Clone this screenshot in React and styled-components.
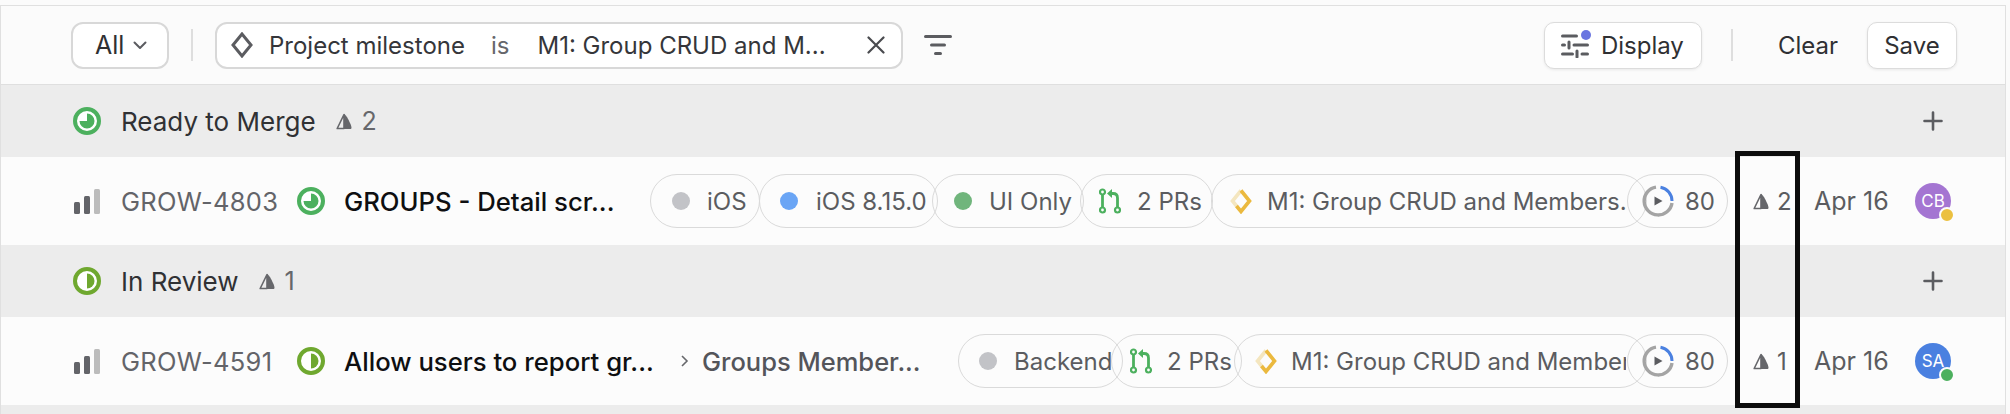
import React from "react";
import styled, { createGlobalStyle } from "styled-components";

const Global = createGlobalStyle`
  html, body { margin: 0; padding: 0; background: #fbfbfb; }
  body { font-family: Inter, "Noto Sans", sans-serif; -webkit-font-smoothing: antialiased; }
`;

const Page = styled.div`
  position: relative;
  width: 2010px;
  height: 414px;
  overflow: hidden;
  box-sizing: border-box;
  padding-top: 5px;
`;
const Panel = styled.div`
  width: 2006px;
  height: 409px;
  box-sizing: border-box;
  border-top: 1px solid #e0e0e0;
  border-left: 1px solid #e0e0e0;
  border-right: 1px solid #e0e0e0;
  background: #ececec;
`;
const Toolbar = styled.div`
  height: 79px;
  box-sizing: border-box;
  border-bottom: 1px solid #dfdfdf;
  background: #fbfbfb;
  display: flex;
  align-items: center;
  padding: 0 48px 0 70px;
`;
const Button = styled.div`
  height: 47px;
  box-sizing: border-box;
  display: flex;
  align-items: center;
  background: #fff;
  border: 1px solid #dcdcdc;
  border-radius: 10px;
  box-shadow: 0 1px 3px rgba(0, 0, 0, 0.08);
  color: #2f3033;
  font-size: 24px;
`;
const AllButton = styled(Button)`
  width: 98px;
  padding-left: 22px;
  gap: 9px;
  border: 2px solid #d8d8d8;
  box-shadow: none;
  border-radius: 12px;
  font-size: 25px;
`;
const Divider = styled.div`
  width: 2px;
  height: 32px;
  background: #dedede;
  margin: ${(p) => p.$margin};
`;
const FilterChip = styled(Button)`
  width: 688px;
  padding: 0 16px 0 14px;
  border: 2px solid #d8d8d8;
  box-shadow: none;
  border-radius: 12px;
`;
const FilterLabel = styled.span`
  margin-left: ${(p) => p.$ml}px;
  color: ${(p) => p.$color || "#35363a"};
  white-space: nowrap;
`;
const FilterValue = styled(FilterLabel)`
  width: 300px;
  overflow: hidden;
`;
const CloseIcon = styled.svg`
  margin-left: auto;
  flex: none;
`;
const FilterIcon = styled.svg`
  margin-left: 21px;
  flex: none;
`;
const Spacer = styled.div`
  flex: 1;
`;
const DisplayButton = styled(Button)`
  width: 158px;
  padding-left: 16px;
  gap: 12px;
  position: relative;
`;
const Dot = styled.span`
  position: absolute;
  left: 36px;
  top: 7px;
  width: 10px;
  height: 10px;
  border-radius: 50%;
  background: #6a75e0;
`;
const ClearText = styled.span`
  font-size: 24px;
  color: #2f3033;
  margin-right: 29px;
`;
const SaveButton = styled(Button)`
  width: 90px;
  justify-content: center;
`;
const GroupHeader = styled.div`
  height: 72px;
  box-sizing: border-box;
  display: flex;
  align-items: center;
  padding: 0 62px 0 72px;
  background: #ececec;
`;
const GroupName = styled.span`
  margin-left: 20px;
  font-size: 26px;
  color: #303134;
  white-space: nowrap;
`;
const GroupCount = styled.span`
  display: flex;
  align-items: center;
  margin-left: 20px;
  gap: 10px;
  font-size: 25px;
  color: #66676b;
`;
const PlusIcon = styled.svg`
  margin-left: auto;
`;
const Row = styled.div`
  height: 88px;
  box-sizing: border-box;
  display: flex;
  align-items: center;
  background: #fcfcfc;
  padding-left: 73px;
`;
const IssueId = styled.span`
  margin-left: 20px;
  width: 176px;
  flex: none;
  font-size: 25.5px;
  color: #636469;
  letter-spacing: 0.3px;
  white-space: nowrap;
`;
const Title = styled.span`
  margin-left: 19px;
  width: ${(p) => p.$width}px;
  flex: none;
  font-size: 25.7px;
  font-weight: 500;
  color: #0e0f11;
  white-space: nowrap;
  overflow: hidden;
`;
const Parent = styled.span`
  flex: none;
  display: flex;
  align-items: center;
  width: ${(p) => p.$width}px;
  font-size: 25.5px;
  font-weight: 500;
  color: #54555a;
  white-space: nowrap;
  gap: 13px;
  margin-left: 26px;
`;
const Chevron = styled.svg`
  flex: none;
`;
const Pills = styled.div`
  flex: none;
  display: flex;
  align-items: center;
`;
const Pill = styled.div`
  flex: none;
  height: 54px;
  box-sizing: border-box;
  width: ${(p) => p.$width}px;
  margin-left: ${(p) => p.$ml || 0}px;
  padding-left: ${(p) => p.$pl}px;
  padding-right: ${(p) => p.$pr || 0}px;
  display: flex;
  align-items: center;
  gap: ${(p) => p.$gap}px;
  border: 1px solid #dadada;
  border-radius: 27px;
  font-size: 24px;
  color: #5b5c60;
  white-space: nowrap;
`;
const PillText = styled.span`
  flex: 1;
  min-width: 0;
  overflow: hidden;
`;
const PillDot = styled.span`
  flex: none;
  width: 18px;
  height: 18px;
  border-radius: 50%;
  background: ${(p) => p.$color};
`;
const Estimate = styled.div`
  margin-left: 25px;
  width: 47px;
  flex: none;
  display: flex;
  align-items: center;
  gap: 8px;
  font-size: 24px;
  color: #5b5c60;
`;
const DateText = styled.span`
  flex: none;
  margin-left: 14px;
  width: 101px;
  font-size: 25px;
  color: #5b5c60;
  white-space: nowrap;
`;
const Avatar = styled.div`
  position: relative;
  flex: none;
  width: 36px;
  height: 36px;
  border-radius: 50%;
  background: ${(p) => p.$color};
  color: #fff;
  font-size: 17px;
  display: flex;
  align-items: center;
  justify-content: center;
`;
const AvatarBadge = styled.span`
  position: absolute;
  right: -4px;
  bottom: -4px;
  width: 12px;
  height: 12px;
  border-radius: 50%;
  border: 2px solid #fcfcfc;
  background: ${(p) => p.$color};
`;
const Highlight = styled.div`
  position: absolute;
  left: 1735px;
  top: 151px;
  width: 65px;
  height: 257px;
  box-sizing: border-box;
  border: 5px solid #0c0c0c;
  pointer-events: none;
`;

const StatusIcon = ({ kind }) => {
  const color = kind === "merge" ? "#4cb05e" : "#6fa82f";
  return (
    <svg width="28" height="28" viewBox="0 0 28 28" style={{ flex: "none" }}>
      <circle cx="14" cy="14" r="12" fill="#fff" stroke={color} strokeWidth="4" />
      {kind === "merge" ? (
        <path d="M14 14V6.5A7.5 7.5 0 1 1 6.5 14Z" fill={color} />
      ) : (
        <path d="M14 6.5A7.5 7.5 0 0 1 14 21.5Z" fill={color} />
      )}
    </svg>
  );
};

const Priority = () => (
  <svg width="27" height="25" viewBox="0 0 27 25" style={{ flex: "none" }}>
    <rect x="0" y="13" width="6" height="12" rx="1.5" fill="#636469" />
    <rect x="10" y="7" width="6" height="18" rx="1.5" fill="#636469" />
    <rect x="20" y="0" width="6" height="25" rx="1.5" fill="#bcbcbc" />
  </svg>
);

const Sail = ({ size = 16 }) => (
  <svg width={size} height={size + 1} viewBox="0 0 16 17" style={{ flex: "none" }}>
    <path d="M8 1.5 1.2 15.5H8Z" fill="none" stroke="#66676b" strokeWidth="1.6" strokeLinejoin="round" />
    <path d="M8 1C10 1 15.5 12 15.5 14.5 15.5 15.5 15 16 14 16H8Z" fill="#66676b" />
  </svg>
);

const Diamond = () => (
  <svg width="22" height="26" viewBox="0 0 22 26" fill="none" strokeWidth="3.6" style={{ flex: "none" }}>
    <path d="M11 2.5 2.5 13 7 18.5" stroke="#f4e6bf" />
    <path d="M11 2.5 19.5 13 11 23.5 6.5 18" stroke="#ebb93e" />
  </svg>
);

const PrIcon = () => (
  <svg width="22" height="26" viewBox="0 0 22 26" fill="none" stroke="#4cb05e" strokeWidth="2.2" style={{ flex: "none" }}>
    <path d="M3.5 6v13" strokeWidth="2.8" />
    <path d="M18.5 19V10c0-2.8-1.5-4.5-4.5-4.5h-3" strokeWidth="2.8" />
    <circle cx="3.5" cy="4" r="2.5" fill="#fcfcfc" />
    <circle cx="3.5" cy="22" r="2.5" fill="#fcfcfc" />
    <circle cx="18.5" cy="22" r="2.5" fill="#fcfcfc" />
    <path d="M8 5.5 13 1v9Z" fill="#4cb05e" stroke="none" />
  </svg>
);

const Progress = () => (
  <svg width="32" height="32" viewBox="0 0 32 32" style={{ flex: "none" }}>
    <path d="M30 18A14 14 0 1 1 14 2.1" fill="none" stroke="#a4a4a4" strokeWidth="3.4" />
    <path d="M18.5 2.2A14 14 0 0 1 30 16" fill="none" stroke="#4a80e0" strokeWidth="3" />
    <path d="M12.5 11.5 20.5 16 12.5 20.5Z" fill="#5b5c60" />
  </svg>
);

const IssueRow = ({ id, status, title, titleWidth, parent, pills, count, avatar, avatarColor, badge }) => (
  <Row>
    <Priority />
    <IssueId>{id}</IssueId>
    <StatusIcon kind={status} />
    <Title $width={titleWidth}>{title}</Title>
    {parent && (
      <Parent $width={277}>
        <Chevron width="8" height="14" viewBox="0 0 8 14" fill="none" stroke="#66676b" strokeWidth="1.6">
          <path d="M1 2l5 5-5 5" />
        </Chevron>
        {parent}
      </Parent>
    )}
    <Pills>{pills}</Pills>
    <Estimate>
      <Sail />
      {count}
    </Estimate>
    <DateText>Apr 16</DateText>
    <Avatar $color={avatarColor}>
      {avatar}
      <AvatarBadge $color={badge} />
    </Avatar>
  </Row>
);

const Group = ({ status, name, count }) => (
  <GroupHeader>
    <StatusIcon kind={status} />
    <GroupName>{name}</GroupName>
    <GroupCount>
      <Sail />
      {count}
    </GroupCount>
    <PlusIcon width="20" height="20" viewBox="0 0 20 20" stroke="#5b5c60" strokeWidth="2.6" strokeLinecap="round">
      <path d="M10 1.5v17M1.5 10h17" />
    </PlusIcon>
  </GroupHeader>
);

export default function App() {
  return (
    <Page>
      <Global />
      <Panel>
        <Toolbar>
          <AllButton>
            All
            <svg width="14" height="9" viewBox="0 0 14 9" fill="none" stroke="#5b5c60" strokeWidth="2" strokeLinecap="round" strokeLinejoin="round">
              <path d="M1.5 1.5 7 7l5.5-5.5" />
            </svg>
          </AllButton>
          <Divider $margin="0 22px 0 22px" />
          <FilterChip>
            <svg width="22" height="26" viewBox="0 0 22 26" fill="none" stroke="#5b5c60" strokeWidth="3" style={{ flex: "none" }}>
              <path d="M11 2 2 13l9 11 9-11Z" />
            </svg>
            <FilterLabel $ml={16}>Project milestone</FilterLabel>
            <FilterLabel $ml={26} $color="#66676b">is</FilterLabel>
            <FilterValue $ml={28}>M1: Group CRUD and M...</FilterValue>
            <CloseIcon width="18" height="18" viewBox="0 0 18 18" stroke="#4a4b4f" strokeWidth="2.2" strokeLinecap="round">
              <path d="M1.5 1.5l15 15M16.5 1.5l-15 15" />
            </CloseIcon>
          </FilterChip>
          <FilterIcon width="28" height="22" viewBox="0 0 28 22" stroke="#5b5c60" strokeWidth="3" strokeLinecap="round">
            <path d="M1.5 2.5h25M7.5 11h13M11.5 19.5h5" />
          </FilterIcon>
          <Spacer />
          <DisplayButton>
            <svg width="28" height="25" viewBox="0 0 28 25" fill="none" stroke="#5b5c60" strokeWidth="3" strokeLinecap="round">
              <path d="M1.5 3h14M1.5 12h2M13 12h13.5M1.5 21h10M21 21h5.5M8 9v6M16 18v6" />
            </svg>
            <Dot />
            Display
          </DisplayButton>
          <Divider $margin="0 45px 0 29px" />
          <ClearText>Clear</ClearText>
          <SaveButton>Save</SaveButton>
        </Toolbar>
        <Group status="merge" name="Ready to Merge" count="2" />
        <IssueRow
          id="GROW-4803"
          status="merge"
          title="GROUPS - Detail scr..."
          titleWidth={306}
          count="2"
          avatar="CB"
          avatarColor="#a475d2"
          badge="#ebc040"
          pills={
            <>
              <Pill $width={110} $pl={21} $gap={17}><PillDot $color="#c2c3c7" /><PillText>iOS</PillText></Pill>
              <Pill $width={179} $ml={-1} $pl={20} $gap={18}><PillDot $color="#6aa5f5" /><PillText>iOS 8.15.0</PillText></Pill>
              <Pill $width={152} $ml={-6} $pl={21} $gap={17}><PillDot $color="#70b57c" /><PillText>UI Only</PillText></Pill>
              <Pill $width={133} $ml={-4} $pl={18} $gap={16}><PrIcon /><PillText>2 PRs</PillText></Pill>
              <Pill $width={436} $ml={-2} $pl={18} $pr={20} $gap={15}><Diamond /><PillText>M1: Group CRUD and Members.</PillText></Pill>
              <Pill $width={101} $ml={-20} $pl={14} $gap={11}><Progress /><PillText>80</PillText></Pill>
            </>
          }
        />
        <Group status="review" name="In Review" count="1" />
        <IssueRow
          id="GROW-4591"
          status="review"
          title="Allow users to report gr..."
          titleWidth={311}
          parent="Groups Member..."
          count="1"
          avatar="SA"
          avatarColor="#4a80e0"
          badge="#4cb05e"
          pills={
            <>
              <Pill $width={165} $pl={20} $gap={17}><PillDot $color="#c2c3c7" /><PillText>Backend</PillText></Pill>
              <Pill $width={131} $ml={-12} $pl={18} $gap={15}><PrIcon /><PillText>2 PRs</PillText></Pill>
              <Pill $width={413} $ml={-8} $pl={20} $pr={20} $gap={14}><Diamond /><PillText>M1: Group CRUD and Members.</PillText></Pill>
              <Pill $width={101} $ml={-20} $pl={14} $gap={11}><Progress /><PillText>80</PillText></Pill>
            </>
          }
        />
      </Panel>
      <Highlight />
    </Page>
  );
}
